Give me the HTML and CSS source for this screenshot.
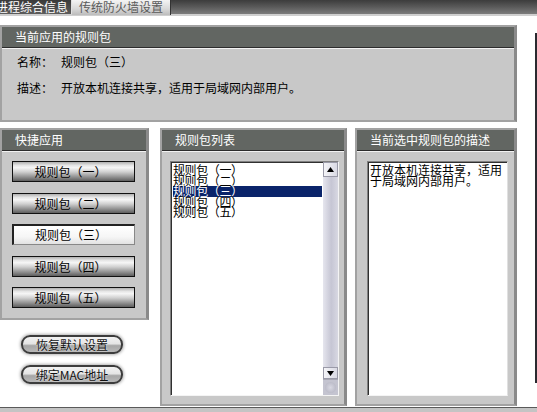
FILE: index.html
```html
<!DOCTYPE html>
<html lang="zh">
<head>
<meta charset="utf-8">
<link rel="stylesheet" href="styles.css">
</head>
<body>
<div class="screen">
  <div class="tabbar">
    <div class="tab tab-off"><span>进程综合信息</span></div>
    <div class="tab tab-on">传统防火墙设置</div>
  </div>
  <div class="content">
    <div class="main">
      <section class="panel panel-top">
        <div class="panel-head">当前应用的规则包</div>
        <div class="panel-body info">
          <div class="row"><span class="label">名称：</span><span>规则包（三）</span></div>
          <div class="row"><span class="label">描述：</span><span>开放本机连接共享，适用于局域网内部用户。</span></div>
        </div>
      </section>
      <div class="lower">
        <div class="left-col">
          <section class="panel panel-quick">
            <div class="panel-head">快捷应用</div>
            <div class="panel-body quick-body">
              <div class="mbtn">规则包（一）</div>
              <div class="mbtn">规则包（二）</div>
              <div class="mbtn mbtn-on">规则包（三）</div>
              <div class="mbtn">规则包（四）</div>
              <div class="mbtn">规则包（五）</div>
            </div>
          </section>
          <div class="ovals">
            <div class="oval">恢复默认设置</div>
            <div class="oval">绑定MAC地址</div>
          </div>
        </div>
        <section class="panel panel-list">
          <div class="panel-head">规则包列表</div>
          <div class="panel-body list-body">
            <div class="listbox">
              <div class="items">
                <div class="item">规则包（一）</div>
                <div class="item">规则包（二）</div>
                <div class="item item-sel">规则包（三）</div>
                <div class="item">规则包（四）</div>
                <div class="item">规则包（五）</div>
              </div>
              <div class="scrollbar">
                <div class="sb-btn sb-up"><svg width="7" height="5" viewBox="0 0 7 5"><path d="M3.5 0L7 5H0z" fill="#000"/></svg></div>
                <div class="sb-track"></div>
                <div class="sb-btn sb-down"><svg width="7" height="5" viewBox="0 0 7 5"><path d="M0 0H7L3.5 5z" fill="#000"/></svg></div>
                <div class="sb-grip"><span></span></div>
              </div>
            </div>
          </div>
        </section>
        <section class="panel panel-desc">
          <div class="panel-head">当前选中规则包的描述</div>
          <div class="panel-body desc-body">
            <div class="textbox">开放本机连接共享，适用于局域网内部用户。</div>
          </div>
        </section>
      </div>
    </div>
    <div class="edge"></div>
  </div>
  <div class="footer"></div>
</div>
</body>
</html>
```

FILE: styles.css
```css
* { box-sizing: border-box; }
html, body { margin: 0; padding: 0; background: #fff; }
body {
  font-family: "Noto Sans CJK SC", "Noto Sans", sans-serif;
  font-size: 12px;
  color: #000;
}
.screen {
  width: 537px;
  height: 412px;
  overflow: hidden;
  display: flex;
  flex-direction: column;
  background: #fff;
}
.tabbar {
  height: 16px;
  flex: none;
  display: flex;
  background: linear-gradient(#3c3c3c, #5a5a5a 50%, #7c7c7c);
  border-bottom: 2px solid #cfcfcf;
}
.tab {
  height: 14px;
  line-height: 13px;
  white-space: nowrap;
}
.tab-off {
  width: 72px;
  overflow: hidden;
  background: linear-gradient(#3a3a3a, #5c5c5c);
  color: #fff;
  border-right: 1px solid #e0e0e0;
}
.tab-off span { margin-left: -4px; }
.tab-on {
  width: 99px;
  height: 15px;
  padding-left: 7px;
  background: linear-gradient(#f4f4f4, #d8d8d8 60%, #bcbcbc);
  color: #5a5a5a;
  border-right: 1px solid #333;
}
.content {
  flex: 1;
  display: flex;
}
.main {
  width: 517px;
  padding-top: 9px;
  display: flex;
  flex-direction: column;
}
.edge {
  width: 2px;
  margin-left: 18px;
  margin-top: 17px;
  height: 350px;
  background: #2a2a30;
}
.panel {
  background: #c8c8c8;
  border: 2px solid #a2a2a2;
  border-right: 3px solid #8a8a8a;
  display: flex;
  flex-direction: column;
}
.panel-head {
  height: 21px;
  flex: none;
  background: #626662;
  color: #fff;
  padding-left: 13px;
  line-height: 19px;
  border-bottom: 1px solid #2c2c2c;
  box-shadow: 0 1px 0 #f2f2f2;
  margin-bottom: 1px;
}
.panel-top {
  height: 97px;
}
.info {
  padding: 6px 0 0 15px;
  display: flex;
  flex-direction: column;
  gap: 12px;
}
.row { display: flex; line-height: 14px; }
.label { width: 44px; }
.lower {
  margin-top: 6px;
  display: flex;
  height: 278px;
}
.left-col {
  width: 149px;
  margin-right: 11px;
  display: flex;
  flex-direction: column;
}
.panel-quick {
  height: 192px;
}
.quick-body {
  padding: 9px 0 0 10px;
}
.mbtn {
  width: 123px;
  height: 21px;
  margin-bottom: 10.5px;
  border: 1px solid #111;
  background: linear-gradient(#b0b0b0 0%, #e6e6e6 18%, #f6f6f6 30%, #d0d0d0 52%, #9a9a9a 75%, #5e5e5e 100%);
  text-align: center;
  line-height: 19px;
  padding-right: 6px;
  color: #000;
}
.mbtn-on {
  background: linear-gradient(#ffffff, #f6f6f6 60%, #e2e2e2);
  border-top: 2px solid #222;
  border-left: 2px solid #222;
  border-right: 1px solid #888;
  border-bottom: 1px solid #888;
  line-height: 18px;
}
.ovals {
  padding: 15px 0 0 21px;
  display: flex;
  flex-direction: column;
  gap: 11px;
}
.oval {
  width: 102px;
  height: 19px;
  border: 2px solid #3c3c3c;
  border-radius: 9px;
  background: linear-gradient(#f2f2f2, #e4e4e4 45%, #a6a6a6 58%, #b8b8b8 100%);
  box-shadow: 0 0 3px 1px rgba(0,0,0,0.3);
  text-align: center;
  line-height: 15px;
  color: #111;
  text-shadow: 0 0 2px #fff;
}
.panel-list {
  width: 187px;
  margin-right: 8px;
}
.list-body {
  flex: 1;
  padding: 9px 5px 8px 8px;
  display: flex;
}
.listbox {
  flex: 1;
  display: flex;
  border-top: 1px solid #808080;
  border-left: 1px solid #808080;
  border-right: 1px solid #f4f4f4;
  border-bottom: 1px solid #f4f4f4;
  box-shadow: inset 1px 1px 0 #303030;
  background: #fff;
}
.items {
  flex: 1;
  padding: 3px 1px 0 2px;
}
.item {
  height: 10.6px;
  line-height: 10.6px;
  white-space: nowrap;
  letter-spacing: -0.4px;
}
.item-sel {
  background: #0a246a;
  color: #fff;
}
.scrollbar {
  width: 15px;
  display: flex;
  flex-direction: column;
  background: linear-gradient(to right, #e6e6ee, #c6c6d4 55%, #d8d8e2);
}
.sb-btn {
  height: 14px;
  display: flex;
  align-items: center;
  justify-content: center;
  background: linear-gradient(to right, #f4f4f8, #dadae4);
  border: 1px solid #9a9aa8;
}
.sb-up { height: 15px; }
.sb-down { height: 12px; }
.sb-track { flex: 1; }
.sb-grip {
  height: 16px;
  background: #c4c4d0;
  border-top: 1px solid #a8a8b4;
  display: flex;
  align-items: center;
  justify-content: center;
}
.sb-grip span {
  width: 11px;
  height: 11px;
  border-radius: 50%;
  background: radial-gradient(#d8d8e2, #b0b0be);
}
.panel-desc {
  width: 162px;
}
.desc-body {
  flex: 1;
  padding: 9px 6px 8px 10px;
  display: flex;
}
.textbox {
  flex: 1;
  background: #fff;
  border-top: 1px solid #808080;
  border-left: 1px solid #808080;
  border-right: 1px solid #e0e0e0;
  border-bottom: 1px solid #f4f4f4;
  box-shadow: inset 1px 1px 0 #303030;
  padding: 2px 2px 0 2px;
  line-height: 11px;
}
.footer {
  flex: none;
  height: 6px;
  border-top: 1px solid #fff;
  background: #c4c4c4;
  box-shadow: inset 0 1px 0 #5a5a5a;
}
```
